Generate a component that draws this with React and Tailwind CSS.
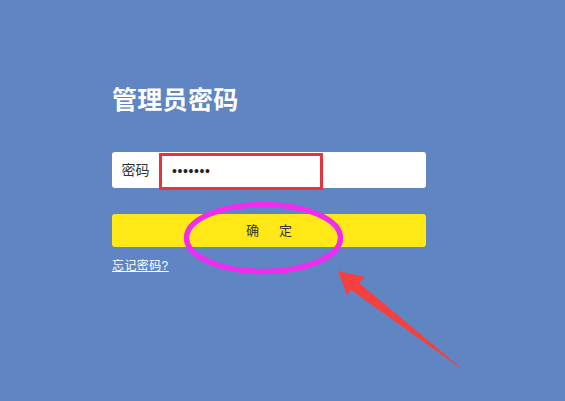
import React from "react";

const font = { fontFamily: '"Liberation Sans", "Noto Sans CJK SC", sans-serif' };

export default function App() {
  return (
    <div
      className="relative w-[565px] h-[401px] overflow-hidden bg-[#5f86c2]"
      style={font}
    >
      <div className="flex flex-col pl-[112px] pt-[84px] w-[426px]">
        <div className="text-[25px] leading-[32px] font-bold text-white tracking-[0.3px]">管理员密码</div>
        <div className="mt-[36px] flex h-[36px] w-[314px] rounded-[3px] bg-white">
          <div className="w-[47px] flex items-center justify-center text-[14px] text-[#333]">密码</div>
          <div className="w-[164px] h-[37px] mt-[1px] border-[3px] border-[#e3363c] flex items-center pl-[10px] text-[14px] tracking-[0.6px] text-[#222]">
            •••••••
          </div>
        </div>
        <div className="mt-[26px] h-[33px] w-[314px] rounded-[3px] bg-[#ffe816] flex items-center justify-center gap-[20px] text-[13px] text-[#333]">
          <span>确</span>
          <span>定</span>
        </div>
        <div className="mt-[11px] text-[12px] leading-[16px] text-white underline tracking-[0.4px]">忘记密码?</div>
      </div>
      <svg className="absolute inset-0" width="565" height="401" viewBox="0 0 565 401">
        <ellipse cx="263.5" cy="238" rx="77" ry="33.5" fill="none" stroke="#ef2cef" strokeWidth="5.5" />
        <polygon
          points="338,271 365,277 359,283 466,372 351,290 347,295"
          fill="#f4403e"
        />
      </svg>
    </div>
  );
}
